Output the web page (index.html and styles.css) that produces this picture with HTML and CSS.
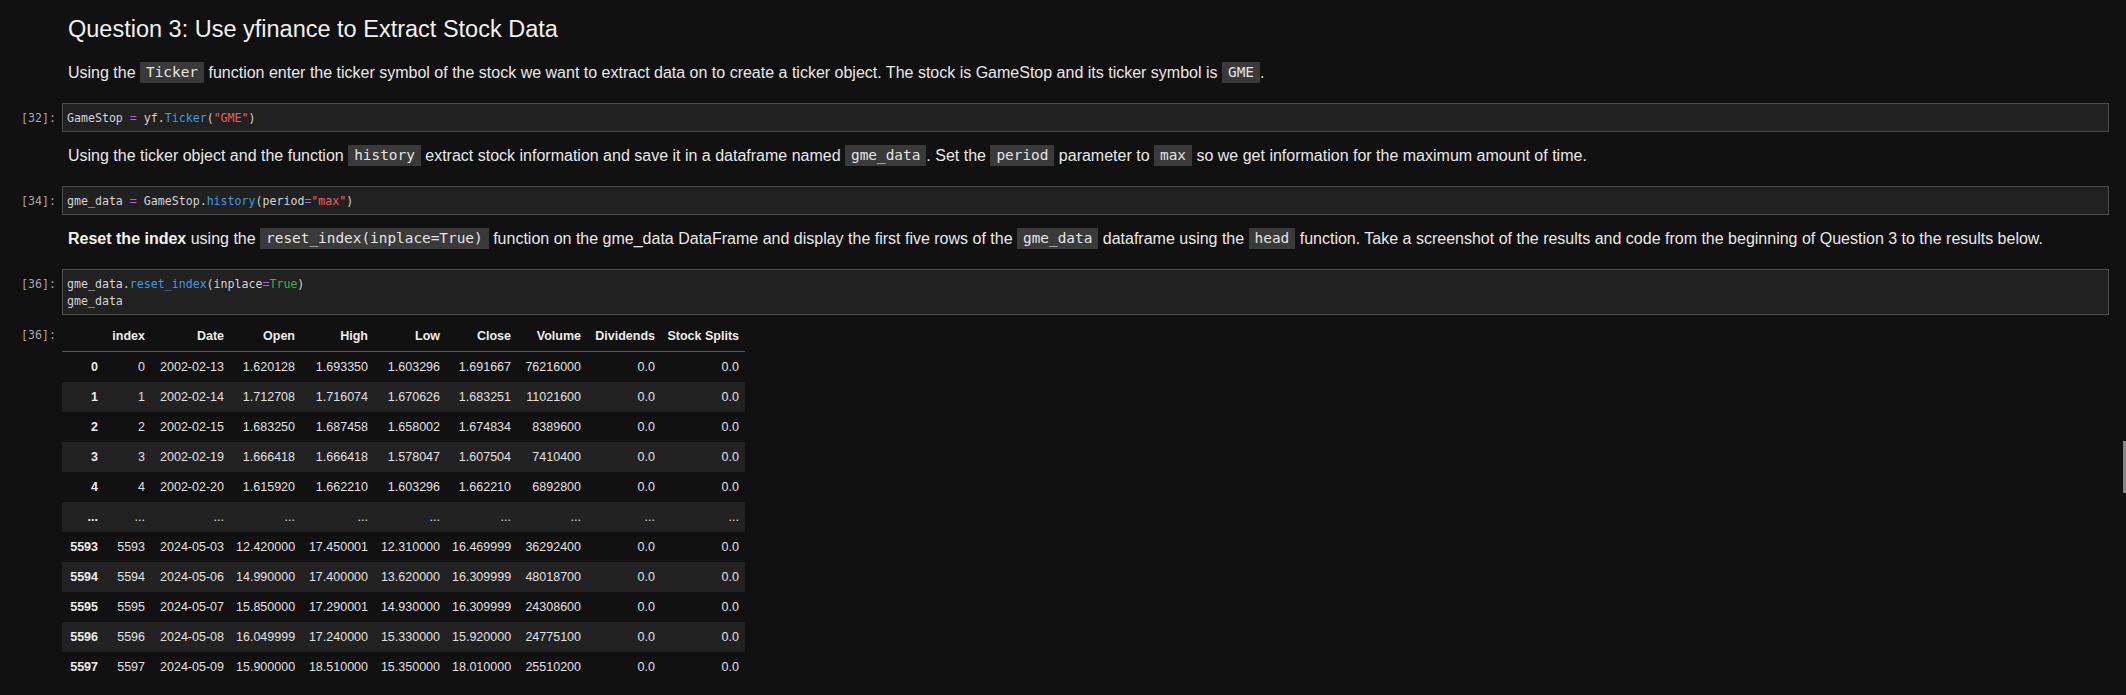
FILE: index.html
```html
<!DOCTYPE html>
<html lang="en">
<head>
<meta charset="utf-8">
<title>Question 3</title>
<link rel="stylesheet" href="styles.css">
</head>
<body>
<div class="notebook">
  <div class="cell md first">
    <div class="prompt"></div>
    <div class="md-body">
      <h2 class="title">Question 3: Use yfinance to Extract Stock Data</h2>
      <p class="para">Using the <code class="ic">Ticker</code> function enter the ticker symbol of the stock we want to extract data on to create a ticker object. The stock is GameStop and its ticker symbol is <code class="ic">GME</code>.</p>
    </div>
  </div>

  <div class="cell code">
    <div class="prompt">[32]:</div>
    <div class="editor"><div class="line">GameStop <span class="op">=</span> yf<span class="pl">.</span><span class="fn">Ticker</span>(<span class="str">"GME"</span>)</div></div>
  </div>

  <div class="cell md">
    <div class="prompt"></div>
    <div class="md-body">
      <p class="para">Using the ticker object and the function <code class="ic">history</code> extract stock information and save it in a dataframe named <code class="ic">gme_data</code>. Set the <code class="ic">period</code> parameter to <code class="ic">max</code> so we get information for the maximum amount of time.</p>
    </div>
  </div>

  <div class="cell code">
    <div class="prompt">[34]:</div>
    <div class="editor"><div class="line">gme_data <span class="op">=</span> GameStop<span class="pl">.</span><span class="fn">history</span>(period<span class="op">=</span><span class="str">"max"</span>)</div></div>
  </div>

  <div class="cell md">
    <div class="prompt"></div>
    <div class="md-body">
      <p class="para"><strong>Reset the index</strong> using the <code class="ic">reset_index(inplace=True)</code> function on the gme_data DataFrame and display the first five rows of the <code class="ic">gme_data</code> dataframe using the <code class="ic">head</code> function. Take a screenshot of the results and code from the beginning of Question 3 to the results below.</p>
    </div>
  </div>

  <div class="cell code">
    <div class="prompt">[36]:</div>
    <div class="editor">
      <div class="line">gme_data<span class="pl">.</span><span class="fn">reset_index</span>(inplace<span class="op">=</span><span class="kw">True</span>)</div>
      <div class="line">gme_data</div>
    </div>
  </div>

  <div class="cell output">
    <div class="prompt out">[36]:</div>
    <div class="out-body">
      <table class="df">
        <colgroup>
          <col class="c-rh"><col class="c-idx"><col class="c-date"><col class="c-open"><col class="c-high"><col class="c-low"><col class="c-close"><col class="c-vol"><col class="c-div"><col class="c-split">
        </colgroup>
        <thead>
          <tr><th></th><th>index</th><th>Date</th><th>Open</th><th>High</th><th>Low</th><th>Close</th><th>Volume</th><th>Dividends</th><th>Stock Splits</th></tr>
        </thead>
        <tbody>
          <tr><th>0</th><td>0</td><td>2002-02-13</td><td>1.620128</td><td>1.693350</td><td>1.603296</td><td>1.691667</td><td>76216000</td><td>0.0</td><td>0.0</td></tr>
          <tr><th>1</th><td>1</td><td>2002-02-14</td><td>1.712708</td><td>1.716074</td><td>1.670626</td><td>1.683251</td><td>11021600</td><td>0.0</td><td>0.0</td></tr>
          <tr><th>2</th><td>2</td><td>2002-02-15</td><td>1.683250</td><td>1.687458</td><td>1.658002</td><td>1.674834</td><td>8389600</td><td>0.0</td><td>0.0</td></tr>
          <tr><th>3</th><td>3</td><td>2002-02-19</td><td>1.666418</td><td>1.666418</td><td>1.578047</td><td>1.607504</td><td>7410400</td><td>0.0</td><td>0.0</td></tr>
          <tr><th>4</th><td>4</td><td>2002-02-20</td><td>1.615920</td><td>1.662210</td><td>1.603296</td><td>1.662210</td><td>6892800</td><td>0.0</td><td>0.0</td></tr>
          <tr><th>...</th><td>...</td><td>...</td><td>...</td><td>...</td><td>...</td><td>...</td><td>...</td><td>...</td><td>...</td></tr>
          <tr><th>5593</th><td>5593</td><td>2024-05-03</td><td>12.420000</td><td>17.450001</td><td>12.310000</td><td>16.469999</td><td>36292400</td><td>0.0</td><td>0.0</td></tr>
          <tr><th>5594</th><td>5594</td><td>2024-05-06</td><td>14.990000</td><td>17.400000</td><td>13.620000</td><td>16.309999</td><td>48018700</td><td>0.0</td><td>0.0</td></tr>
          <tr><th>5595</th><td>5595</td><td>2024-05-07</td><td>15.850000</td><td>17.290001</td><td>14.930000</td><td>16.309999</td><td>24308600</td><td>0.0</td><td>0.0</td></tr>
          <tr><th>5596</th><td>5596</td><td>2024-05-08</td><td>16.049999</td><td>17.240000</td><td>15.330000</td><td>15.920000</td><td>24775100</td><td>0.0</td><td>0.0</td></tr>
          <tr><th>5597</th><td>5597</td><td>2024-05-09</td><td>15.900000</td><td>18.510000</td><td>15.350000</td><td>18.010000</td><td>25510200</td><td>0.0</td><td>0.0</td></tr>
        </tbody>
      </table>
    </div>
  </div>
</div>
<div class="scroll-thumb"></div>
</body>
</html>
```

FILE: styles.css
```css
html, body {
  margin: 0;
  padding: 0;
  background: #111111;
}

body {
  font-family: "Liberation Sans", Arial, sans-serif;
  color: #e6e6e6;
  width: 2126px;
  height: 695px;
  overflow: hidden;
}

.notebook {
  display: flex;
  flex-direction: column;
  padding-right: 17px;
}

.cell {
  display: flex;
  align-items: flex-start;
}

.prompt {
  width: 62px;
  flex: 0 0 62px;
  box-sizing: border-box;
  padding-right: 6px;
  text-align: right;
  font-family: "DejaVu Sans Mono", "Liberation Mono", monospace;
  font-size: 11.6px;
  line-height: 17px;
  color: #a8a8a8;
}

/* markdown */
.md-body {
  flex: 1;
  padding-left: 6px;
}

.cell.md {
  padding-top: 13px;
  padding-bottom: 20px;
}

.cell.md.first {
  padding-top: 15px;
}

.title {
  margin: 0 0 18px 0;
  font-size: 23.5px;
  font-weight: normal;
  line-height: 29px;
  color: #f0f0f0;
}

.para {
  margin: 0;
  font-size: 16px;
  line-height: 21px;
  color: #e8e8e8;
}

.para strong {
  font-weight: bold;
  color: #f2f2f2;
}

.ic {
  display: inline-block;
  height: 21px;
  line-height: 21px;
  padding: 0 6px;
  vertical-align: top;
  background: #3a3a3a;
  font-family: "DejaVu Sans Mono", "Liberation Mono", monospace;
  font-size: 14.4px;
  color: #e4e4e4;
}

/* code cells */
.cell.code .prompt {
  padding-top: 7px;
}

.editor {
  flex: 1;
  background: #212121;
  border: 1px solid #4d4d4d;
  padding: 6px 4px 4px 4px;
  font-family: "DejaVu Sans Mono", "Liberation Mono", monospace;
  font-size: 11.6px;
  line-height: 17px;
  color: #d4d4d4;
}

.line {
  white-space: pre;
  height: 17px;
}

.op { color: #b460e6; }
.pl { color: #d4d4d4; }
.fn { color: #3d9be3; }
.str { color: #ec5f5f; }
.kw { color: #46b04a; }

/* output */
.cell.output {
  padding-top: 6px;
}

.prompt.out {
  padding-top: 6px;
  line-height: 17px;
}

.out-body {
  flex: 1;
}

.df {
  border-collapse: collapse;
  table-layout: fixed;
  width: 683px;
  font-family: "Liberation Sans", Arial, sans-serif;
  font-size: 12.5px;
  color: #e0e0e0;
}

.c-rh { width: 42px; }
.c-idx { width: 47px; }
.c-date { width: 79px; }
.c-open { width: 71px; }
.c-high { width: 73px; }
.c-low { width: 72px; }
.c-close { width: 71px; }
.c-vol { width: 70px; }
.c-div { width: 74px; }
.c-split { width: 84px; }

.df th,
.df td {
  text-align: right;
  padding: 0 6px;
  white-space: nowrap;
  overflow: visible;
}

.df thead th {
  height: 30px;
  font-weight: bold;
  color: #ececec;
  border-bottom: 1px solid #5a5a5a;
}

.df tbody th,
.df tbody td {
  height: 30px;
}

.df tbody th {
  font-weight: bold;
  color: #ececec;
}

.df tbody tr:nth-child(even) {
  background: #222222;
}

.scroll-thumb {
  position: absolute;
  left: 2123px;
  top: 441px;
  width: 3px;
  height: 52px;
  background: #858585;
}
```
